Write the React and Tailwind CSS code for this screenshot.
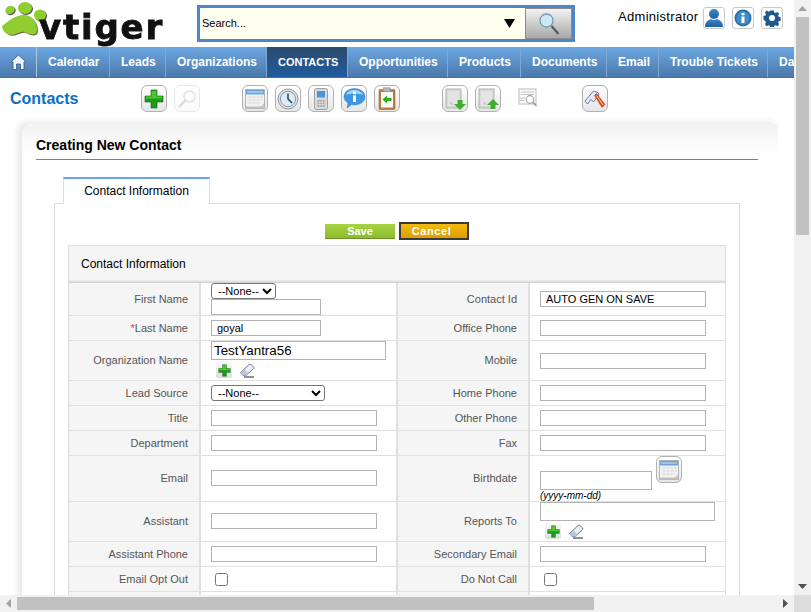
import React from "react";

const Frame = ({ children, className = "" }) => (
  <div className={"flex h-[27px] w-[26px] items-center justify-center rounded-[6px] border border-[#b0b0b0] bg-gradient-to-b from-white to-[#e6e6e6] " + className}>
    {children}
  </div>
);

const PlusIcon = ({ s = 20 }) => (
  <svg width={s} height={s} viewBox="0 0 20 20">
    <path d="M7 1h6v6h6v6h-6v6H7v-6H1V7h6z" fill="#1c9a1c" stroke="#0c6a0c" strokeWidth="0.6" />
    <path d="M7.600 2h4.800v5.600H18v2H2v-2h5.600z" fill="#5fce3a" opacity="0.8" />
  </svg>
);
const SearchFaint = () => (
  <svg width="20" height="20" viewBox="0 0 20 20" fill="none">
    <circle cx="12.500" cy="7.500" r="5.500" stroke="#e2e2e2" strokeWidth="1.500" fill="#fbfbfb" />
    <path d="M8.500 11.500 2.500 17.500" stroke="#dedede" strokeWidth="2.500" strokeLinecap="round" />
  </svg>
);
const CalIcon = () => (
  <svg width="20" height="20" viewBox="0 0 20 20">
    <rect x="0.500" y="0.500" width="19" height="19" fill="#f4f4f4" stroke="#b4b4b4" />
    <rect x="1" y="1" width="18" height="4.500" fill="#6aa3de" />
    <path d="M2 3h16" stroke="#cfe3f7" />
    <path d="M2 8h16M2 11h16M2 14h14M5 6v10M9 6v10M13 6v10M16.500 6v5" stroke="#dcdcdc" strokeWidth="0.800" />
    <path d="M14 19l5-5v5z" fill="#cfcfcf" />
    <rect x="1" y="17.500" width="18" height="2" fill="#c0c0c0" />
  </svg>
);
const ClockIcon = () => (
  <svg width="22" height="22" viewBox="0 0 22 22">
    <circle cx="11" cy="11" r="10" fill="#dedede" stroke="#9a9a9a" />
    <circle cx="11" cy="11" r="7.600" fill="#dcedf9" stroke="#7d9db4" />
    <path d="M11 5.500V11l4 4" fill="none" stroke="#2f3d48" strokeWidth="1.500" />
  </svg>
);
const PhoneIcon = () => (
  <svg width="14" height="22" viewBox="0 0 14 22">
    <rect x="0.500" y="0.500" width="13" height="21" rx="2" fill="#dadada" stroke="#a0a0a0" />
    <rect x="3" y="3" width="8" height="6.500" fill="#4a96dd" />
    <rect x="3.500" y="12" width="7" height="7" fill="#a4a4a4" />
    <path d="M3.500 14.300h7M3.500 16.600h7M5.800 12v7M8.200 12v7" stroke="#e8e8e8" strokeWidth="0.700" />
  </svg>
);
const BubbleIcon = () => (
  <svg width="23" height="23" viewBox="0 0 23 23">
    <path d="M11.500 1.500c5.800 0 10.500 3.600 10.500 8.200s-4.700 8.200-10.500 8.200c-1 0-2-.1-2.900-.3L4 21l1-5C2.500 14.500 1 12.300 1 9.700 1 5.100 5.700 1.500 11.500 1.500z" fill="#3b98e6" stroke="#2e7bc0" strokeWidth="0.500" />
    <path d="M3 8c1-3.500 5-5 8.500-5s7 1.500 8.500 5c-5-2-12-2-17 0z" fill="#a6d5f8" />
    <rect x="10" y="8.500" width="3" height="6.500" fill="#fff" />
    <rect x="10" y="4.800" width="3" height="2.500" fill="#fff" />
  </svg>
);
const ClipIcon = () => (
  <svg width="18" height="23" viewBox="0 0 18 23">
    <rect x="1" y="2.500" width="16" height="20" rx="1" fill="#bd7a45" stroke="#96602f" strokeWidth="0.500" />
    <rect x="3" y="5" width="12" height="15.500" fill="#fbfbf3" />
    <rect x="5.500" y="0.800" width="7" height="4" fill="#b4b4b4" stroke="#8a8a8a" strokeWidth="0.500" />
    <path d="M4.500 12.500 9 8.500V11h4.500v3H9v2.500z" fill="#2aa82a" />
  </svg>
);
const DoorIcon = ({ up }) => (
  <svg width="24" height="24" viewBox="0 0 24 24">
    <rect x="3" y="2" width="15" height="19" fill="#d8d8d8" stroke="#b4b4b4" />
    <path d="M5 4h11v15H5z" fill="#e4e4e4" />
    <path d="M8 15v2h2" fill="none" stroke="#a8a8a8" strokeWidth="0.800" />
    {up ? (
      <path d="M17 12l6 6h-3.500v4h-5v-4H11z" fill="#3eae2c" />
    ) : (
      <path d="M14.500 13h5v4H23l-6 6-6-6h3.500z" fill="#3eae2c" />
    )}
  </svg>
);
const FindDup = () => (
  <svg width="20" height="20" viewBox="0 0 20 20" fill="none">
    <rect x="1" y="1" width="17" height="15" fill="#fbfbfb" stroke="#bcbcbc" />
    <path d="M3 4h13M3 6.500h13M2 10h5M2 12.500h4" stroke="#c4c4c4" />
    <circle cx="12" cy="11.500" r="3.800" fill="#fff" stroke="#a4a4a4" strokeWidth="1.200" />
    <path d="m15 14.500 3.500 3.500" stroke="#959595" strokeWidth="1.600" />
  </svg>
);
const HammerIcon = () => (
  <svg width="22" height="22" viewBox="0 0 22 22">
    <path d="M1 13 9.500 3l4.500 1.500 1 2.500-5.500 7L7 11.500 3.500 16z" fill="#e4e9f9" stroke="#5f6fa3" strokeWidth="0.900" />
    <path d="m10.500 7.500 2-2 8.500 11-3 3z" fill="#e8491a" stroke="#9c3208" strokeWidth="0.500" />
    <path d="m12.500 7.500 6.500 9.500" stroke="#ffd08a" strokeWidth="1" />
  </svg>
);
const Eraser = () => (
  <svg width="16" height="15" viewBox="0 0 16 15">
    <path d="M1.500 9.500 9.500 2c1-1 2-1 3 0l2 1.800c.6.800.4 1.500-.4 2.300L7 12.500H4z" fill="#e9edf5" stroke="#5c6a88" strokeWidth="0.900" />
    <path d="M1.500 9.500 4 12.500h3l2-2-3.500-4.500z" fill="#b9c6e0" />
    <path d="M5 14h10" stroke="#222" strokeWidth="1" />
  </svg>
);
const SmallPlus = () => (
  <div className="flex h-[16px] w-[16px] items-center justify-center rounded-[2px] bg-gradient-to-b from-[#fafafa] to-[#dcdcdc]">
    <PlusIcon s={13} />
  </div>
);

const HeadBtn = ({ children }) => (
  <div className="flex h-[22px] w-[22px] items-center justify-center rounded-[3px] border border-[#c9c9c9] bg-white">{children}</div>
);

const Tx = ({ className = "" }) => (
  <input readOnly className={"block border border-[#b3b3b3] bg-white " + className} />
);

const Label = ({ children, wide }) => (
  <div className={"flex items-center justify-end bg-[#f5f5f5] pr-[11px] text-[11px] text-[#555555] " + (wide ? "border-l-2 border-[#e0e0e0]" : "")}>
    <span className="whitespace-nowrap">{children}</span>
  </div>
);
const Val = ({ children, className = "" }) => (
  <div className={"flex border-l-2 border-[#e0e0e0] bg-white pl-[10px] " + className}>{children}</div>
);

const Row = ({ h, children }) => (
  <div className={"grid grid-cols-[130px_197px_132px_197px] border-b border-[#e0e0e0] " + h}>{children}</div>
);

const None = ({ className }) => (
  <select className={"block rounded-[3px] border border-[#767676] bg-white pl-[2px] text-[11px] text-black " + className} defaultValue="n">
    <option value="n">--None--</option>
  </select>
);

const Input166 = () => <Tx className="h-[16px] w-[166px]" />;

const Nav = ({ w, children, active }) => (
  <div className={"flex h-full shrink-0 items-center border-r border-[#7fa9d4] pl-[11px] font-bold text-white " + w + (active ? " bg-gradient-to-b from-[#2b4a6c] to-[#1f5c9f] text-[11px]" : " text-[12px]")}>
    <span className="whitespace-nowrap">{children}</span>
  </div>
);

export default function App() {
  return (
    <div className="flex h-[612px] w-[811px] flex-col overflow-hidden bg-white font-['Liberation_Sans',Arial,sans-serif]">
      <div className="flex h-[595px] w-[811px]">
        <main className="h-[595px] w-[794px] overflow-hidden">
          {/* header */}
          <header className="flex h-[47px]">
            <div className="relative h-[47px] w-[197px] shrink-0">
              <svg className="absolute left-0 top-0 blur-[0.4px]" width="60" height="44" viewBox="0 0 60 44">
                <ellipse cx="11" cy="11" rx="5" ry="4" fill="#555" transform="rotate(-35 11 11)" />
                <ellipse cx="10" cy="10" rx="5" ry="4" fill="#8fce2e" transform="rotate(-35 10 10)" />
                <ellipse cx="26" cy="9" rx="7" ry="6" fill="#555" />
                <ellipse cx="25" cy="8" rx="7" ry="6" fill="#8fce2e" />
                <ellipse cx="41" cy="16" rx="6" ry="5.500" fill="#555" />
                <ellipse cx="40" cy="15" rx="6" ry="5.500" fill="#8fce2e" />
                <path d="M3 27C9 23 15 16 25 16c8 0 13 7 13 15 0 6-7 5-12 2-5-2-11 5-17 2-4-2-6-5-6-8z" fill="#6a6a4a" />
                <path d="M2 26C8 22 14 15 24 15c8 0 13 7 13 15 0 6-7 5-12 2-5-2-11 5-17 2-4-2-6-5-6-8z" fill="#8fce2e" />
              </svg>
              <span className="absolute left-[39px] top-[5px] font-['DejaVu_Sans',sans-serif] text-[34px] font-bold leading-[44px] tracking-[1.8px] text-[#111] blur-[0.5px] [-webkit-text-stroke:0.8px_#111]">vtiger</span>
            </div>
            <div className="mt-[5px] flex h-[37px] w-[378px] shrink-0 border-[3px] border-[#4f86c6]">
              <div className="flex flex-1 items-center justify-between bg-[#fffff0] pl-[2px] pr-[10px] text-[11px] text-black">
                <span>Search...</span>
                <svg width="11" height="9" viewBox="0 0 11 9"><path d="M0 0h11L5.500 9z" fill="#000" /></svg>
              </div>
              <div className="flex w-[47px] items-center justify-center border border-[#8c8c8c] bg-gradient-to-b from-[#f4f4f4] to-[#a8a8a8]">
                <svg width="22" height="24" viewBox="0 0 22 24" fill="none">
                  <circle cx="8.500" cy="8.500" r="6.500" fill="#cfe9f3" stroke="#6f9fb0" strokeWidth="1.300" />
                  <path d="m13.500 14 7 8" stroke="#555" strokeWidth="2" />
                </svg>
              </div>
            </div>
            <div className="ml-[43px] mt-[6px] flex h-[22px] w-[79px] items-center whitespace-nowrap text-[13px] tracking-[0.3px] text-black">Administrator</div>
            <div className="ml-[6px] mt-[7px] flex gap-[7px]">
              <HeadBtn>
                <svg width="20" height="18" viewBox="0 0 20 18">
                  <defs>
                    <linearGradient id="u" x1="0" y1="0" x2="0" y2="1">
                      <stop offset="0" stopColor="#3f86c8" />
                      <stop offset="1" stopColor="#1f5f9f" />
                    </linearGradient>
                  </defs>
                  <ellipse cx="10" cy="5" rx="5" ry="5" fill="url(#u)" />
                  <path d="M1 18c0-5 3-7 6-8 2 1.300 4 1.300 6 0 3 1 6 3 6 8z" fill="url(#u)" />
                </svg>
              </HeadBtn>
              <HeadBtn>
                <svg width="18" height="18" viewBox="0 0 18 18">
                  <circle cx="9" cy="9" r="8.500" fill="#2b6ea8" />
                  <circle cx="9" cy="9" r="6.800" fill="#3f8bc8" />
                  <rect x="7.500" y="7.500" width="3" height="6.500" fill="#fff" />
                  <rect x="7.500" y="3.800" width="3" height="2.500" fill="#fff" />
                </svg>
              </HeadBtn>
              <HeadBtn>
                <svg width="18" height="18" viewBox="0 0 18 18">
                  <path d="M7 .5h4l.6 2.300 1.400.6 2.100-1.200 2.200 2.200-1.200 2.100.6 1.400 2.300.6v4l-2.300.6-.6 1.400 1.200 2.100-2.200 2.200-2.100-1.200-1.400.6-.6 2.300H7l-.6-2.300-1.400-.6-2.100 1.200-2.200-2.200 1.200-2.100-.6-1.400L-1 11V7l2.300-.6.6-1.400L.7 2.900 2.900.700 5 1.900l1.400-.6z" fill="#1f5a8c" transform="translate(1.300 1) scale(.86)" />
                  <circle cx="9" cy="9" r="3" fill="#fff" />
                </svg>
              </HeadBtn>
            </div>
          </header>

          {/* nav */}
          <nav className="flex h-[31px] overflow-hidden border-b border-[#4c6f96] bg-gradient-to-b from-[#6da8e3] to-[#4a78aa]">
            <div className="flex h-full w-[37px] shrink-0 items-center justify-center border-r border-[#a9c8e6]">
              <svg width="17" height="16" viewBox="0 0 17 16">
                <path d="M8.500 1 16 8h-2v7.500h-3.500V10h-4v5.500H3V8H1z" fill="#eef4fa" stroke="#35567c" strokeWidth="0.800" />
              </svg>
            </div>
            <Nav w="w-[73px]">Calendar</Nav>
            <Nav w="w-[56px]">Leads</Nav>
            <Nav w="w-[101px]">Organizations</Nav>
            <Nav w="w-[81px]" active>CONTACTS</Nav>
            <Nav w="w-[100px]">Opportunities</Nav>
            <Nav w="w-[73px]">Products</Nav>
            <Nav w="w-[86px]">Documents</Nav>
            <Nav w="w-[52px]">Email</Nav>
            <Nav w="w-[109px]">Trouble Tickets</Nav>
            <Nav w="w-[60px]">Dashboard</Nav>
          </nav>

          {/* toolbar */}
          <div className="flex h-[39px] items-start pt-[7px]">
            <div className="w-[141px] shrink-0 pl-[10px] pt-[5px] text-[16px] font-bold leading-[18px] text-[#0a6fc2]">Contacts</div>
            <div className="flex gap-[7px]">
              <Frame><div className="blur-[0.3px]"><PlusIcon /></div></Frame>
              <Frame className="border-[#e8e8e8] from-white to-[#fafafa]"><SearchFaint /></Frame>
            </div>
            <div className="ml-[42px] flex gap-[7px]">
              <Frame><div className="blur-[0.3px]"><CalIcon /></div></Frame>
              <Frame><div className="blur-[0.3px]"><ClockIcon /></div></Frame>
              <Frame><div className="blur-[0.3px]"><PhoneIcon /></div></Frame>
              <Frame><div className="blur-[0.3px]"><BubbleIcon /></div></Frame>
              <Frame><div className="blur-[0.3px]"><ClipIcon /></div></Frame>
            </div>
            <div className="ml-[42px] flex gap-[7px]">
              <Frame><DoorIcon /></Frame>
              <Frame><DoorIcon up /></Frame>
            </div>
            <div className="ml-[17px] mt-[3px]"><FindDup /></div>
            <div className="ml-[44px]">
              <Frame><div className="blur-[0.2px]"><HammerIcon /></div></Frame>
            </div>
          </div>

          {/* card */}
          <div className="w-[778px] overflow-hidden pl-[22px] pt-[7px]">
            <div className="h-[600px] w-[756px] rounded-tl-[10px] bg-gradient-to-b from-[#f2f2f2] via-white via-[5%] to-white pl-[14px] shadow-[-5px_-3px_5px_rgba(0,0,0,0.08)]">
              <div className="h-[36px] w-[722px] border-b border-[#808080] pt-[13px] text-[14px] font-bold leading-[16px] text-black">Creating New Contact</div>

              {/* tab */}
              <div className="relative z-10 ml-[27px] mt-[17px] flex h-[27px] w-[147px] items-center justify-center border-x border-t-2 border-[#dddddd] border-t-[#6aa5e5] bg-white pb-[1px] text-[12px] text-black">Contact Information</div>

              {/* tab body */}
              <div className="relative ml-[18px] mt-[-1px] h-[500px] w-[686px] border border-[#dddddd] bg-white px-[13px]">
                <div className="flex h-[41px] items-start justify-center gap-[4px] pt-[18px]">
                  <div className="mt-[2px] flex h-[15px] w-[70px] items-center justify-center border-b border-[#6f8f2a] bg-gradient-to-b from-[#a8d444] to-[#8cbc2e] text-[11px] font-bold text-white">Save</div>
                  <div className="flex h-[18px] w-[70px] items-center justify-center border-2 border-[#3a3a3a] bg-gradient-to-b from-[#f4b90f] to-[#dd9f00] pr-[5px] text-[11px] font-bold tracking-[0.6px] text-white">Cancel</div>
                </div>

                <div className="w-[658px] border-x border-t border-[#dddddd]">
                  <div className="flex h-[34px] items-center bg-[#f5f5f5] pl-[12px] pt-[2px] text-[12px] text-black">Contact Information</div>
                  <div className="h-[3px] bg-gradient-to-b from-[#f0f0f0] to-[#cfcfcf]"></div>

                  <Row h="h-[33px]">
                    <Label>First Name</Label>
                    <Val className="flex-col">
                      <None className="h-[16px] w-[65px]" />
                      <Tx className="h-[16px] w-[110px]" />
                    </Val>
                    <Label wide>Contact Id</Label>
                    <Val className="items-center">
                      <input readOnly value="AUTO GEN ON SAVE" className="block h-[16px] w-[166px] border border-[#b3b3b3] pl-[5px] text-[11px] text-black" />
                    </Val>
                  </Row>
                  <Row h="h-[25px]">
                    <Label><span className="text-[#e04040]">*</span>Last Name</Label>
                    <Val className="items-center">
                      <input readOnly value="goyal" className="block h-[16px] w-[110px] border border-[#b3b3b3] pl-[5px] text-[11px] text-black" />
                    </Val>
                    <Label wide>Office Phone</Label>
                    <Val className="items-center"><Input166 /></Val>
                  </Row>
                  <Row h="h-[40px]">
                    <Label>Organization Name</Label>
                    <Val className="flex-col">
                      <input readOnly value="TestYantra56" className="block h-[19px] w-[175px] border border-[#b3b3b3] pl-[2px] text-[13.330px] text-black" />
                      <div className="ml-[5px] mt-[2px] flex items-center gap-[7px]"><SmallPlus /><Eraser /></div>
                    </Val>
                    <Label wide>Mobile</Label>
                    <Val className="items-center"><Input166 /></Val>
                  </Row>
                  <Row h="h-[25px]">
                    <Label>Lead Source</Label>
                    <Val className="items-center"><None className="h-[16px] w-[114px]" /></Val>
                    <Label wide>Home Phone</Label>
                    <Val className="items-center"><Input166 /></Val>
                  </Row>
                  <Row h="h-[25px]">
                    <Label>Title</Label>
                    <Val className="items-center"><Input166 /></Val>
                    <Label wide>Other Phone</Label>
                    <Val className="items-center"><Input166 /></Val>
                  </Row>
                  <Row h="h-[25px]">
                    <Label>Department</Label>
                    <Val className="items-center"><Input166 /></Val>
                    <Label wide>Fax</Label>
                    <Val className="items-center"><Input166 /></Val>
                  </Row>
                  <Row h="h-[46px]">
                    <Label>Email</Label>
                    <Val className="items-center pb-[1px]"><Input166 /></Val>
                    <Label wide>Birthdate</Label>
                    <Val className="flex-col">
                      <div className="flex h-[34px] items-start gap-[4px]">
                        <Tx className="mt-[15px] h-[19px] w-[112px]" />
                        <Frame><div className="blur-[0.3px]"><CalIcon /></div></Frame>
                      </div>
                      <span className="text-[10px] italic leading-[11px] text-black">(yyyy-mm-dd)</span>
                    </Val>
                  </Row>
                  <Row h="h-[40px]">
                    <Label>Assistant</Label>
                    <Val className="items-center pb-[1px]"><Input166 /></Val>
                    <Label wide>Reports To</Label>
                    <Val className="flex-col">
                      <Tx className="h-[19px] w-[175px]" />
                      <div className="ml-[5px] mt-[2px] flex items-center gap-[7px]"><SmallPlus /><Eraser /></div>
                    </Val>
                  </Row>
                  <Row h="h-[25px]">
                    <Label>Assistant Phone</Label>
                    <Val className="items-center"><Input166 /></Val>
                    <Label wide>Secondary Email</Label>
                    <Val className="items-center"><Input166 /></Val>
                  </Row>
                  <Row h="h-[25px]">
                    <Label>Email Opt Out</Label>
                    <Val className="items-center"><input type="checkbox" className="ml-[4px] block h-[13px] w-[13px]" /></Val>
                    <Label wide>Do Not Call</Label>
                    <Val className="items-center"><input type="checkbox" className="ml-[4px] block h-[13px] w-[13px]" /></Val>
                  </Row>
                  <Row h="h-[25px]">
                    <Label> </Label>
                    <Val> </Val>
                    <Label wide> </Label>
                    <Val> </Val>
                  </Row>
                </div>
              </div>
            </div>
          </div>
        </main>

        {/* vertical scrollbar */}
        <div className="flex h-[595px] w-[17px] shrink-0 flex-col items-center bg-[#f1f1f1]">
          <div className="flex h-[17px] items-center justify-center">
            <svg width="9" height="5" viewBox="0 0 9 5"><path d="M0 5 4.500 0 9 5z" fill="#a3a3a3" /></svg>
          </div>
          <div className="h-[218px] w-[13px] bg-[#c1c1c1]"></div>
          <div className="flex-1"></div>
          <div className="flex h-[17px] items-center justify-center">
            <svg width="9" height="5" viewBox="0 0 9 5"><path d="M0 0h9L4.500 5z" fill="#505050" /></svg>
          </div>
        </div>
      </div>

      {/* horizontal scrollbar */}
      <div className="flex h-[17px] w-[811px] bg-[#f1f1f1]">
        <div className="flex w-[17px] items-center justify-center">
          <svg width="5" height="9" viewBox="0 0 5 9"><path d="M5 0v9L0 4.500z" fill="#a3a3a3" /></svg>
        </div>
        <div className="my-[2px] h-[13px] w-[577px] bg-[#c1c1c1]"></div>
        <div className="flex-1"></div>
        <div className="flex w-[17px] items-center justify-center">
          <svg width="5" height="9" viewBox="0 0 5 9"><path d="M0 0v9l5-4.500z" fill="#505050" /></svg>
        </div>
        <div className="w-[17px] bg-[#dcdcdc]"></div>
      </div>
    </div>
  );
}
